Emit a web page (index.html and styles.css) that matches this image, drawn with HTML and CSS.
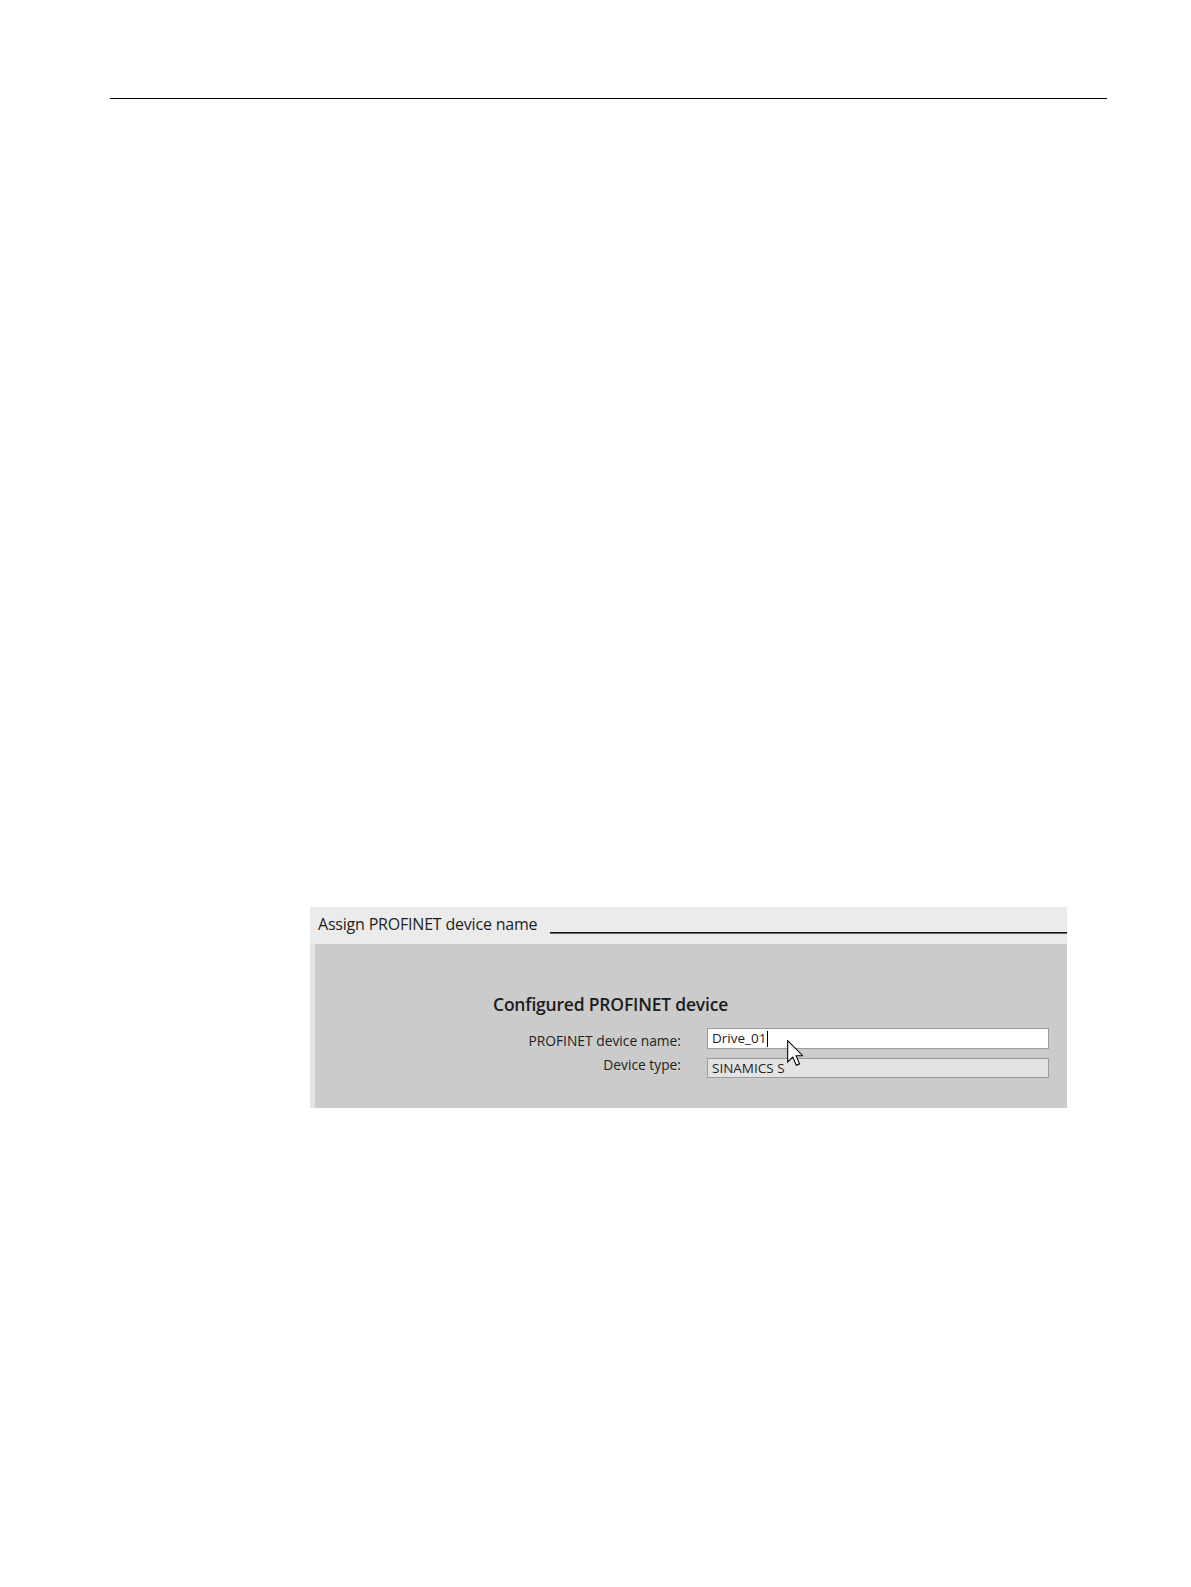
FILE: index.html
```html
<!DOCTYPE html>
<html>
<head>
<meta charset="utf-8">
<link rel="stylesheet" href="styles.css">
</head>
<body>
<div class="top-rule"></div>
<div class="panel">
  <div class="panel-head">
    <span class="head-title">Assign PROFINET device name</span>
    <span class="head-line"></span>
  </div>
  <div class="panel-body">
    <div class="form">
      <div class="form-title">Configured PROFINET device</div>
      <div class="form-rows">
        <div class="labels">
          <div class="label">PROFINET device name:</div>
          <div class="label">Device type:</div>
        </div>
        <div class="fields">
          <div class="field field-edit">Drive_01<span class="caret"></span></div>
          <div class="field field-ro">SINAMICS S</div>
        </div>
      </div>
    </div>
    <svg class="pointer" width="16" height="26" viewBox="0 0 12 19.5">
      <path d="M0.5,0.5 L0.5,16.5 L4.3,12.8 L7,18.9 L9.4,17.9 L6.8,11.8 L11.8,11.8 Z" fill="#fff" stroke="#000" stroke-width="0.8" stroke-linejoin="miter"/>
    </svg>
  </div>
</div>
</body>
</html>
```

FILE: styles.css
```css
html, body {
  margin: 0;
  padding: 0;
  background: #ffffff;
}
body {
  font-family: "Open Sans", "Noto Sans", sans-serif;
  color: #1a1a1a;
}
.top-rule {
  margin: 98px 84px 0 110px;
  height: 1px;
  background: #000;
}
.panel {
  margin: 808px 0 0 310px;
  width: 757px;
  position: relative;
}
.panel-head {
  height: 37px;
  background: #ebebeb;
  display: flex;
  align-items: flex-start;
}
.head-title {
  font-size: 16px;
  line-height: 22px;
  padding: 6px 0 0 8px;
  color: #1e1e1e;
  white-space: nowrap;
  letter-spacing: -0.2px;
}
.head-line {
  flex: 1;
  height: 1px;
  margin: 25px 0 0 13px;
  background: #111;
  border-bottom: 1px solid #666;
}
.panel-body {
  height: 164px;
  background: #cbcbcb;
  border-left: 5px solid #e4e4e4;
  box-sizing: border-box;
  padding: 48px 0 0 178px;
  position: relative;
}
.form {
  width: 556px;
}
.form-title {
  font-size: 17.5px;
  font-weight: 600;
  line-height: 24px;
  color: #1c1c1c;
  letter-spacing: -0.2px;
}
.form-rows {
  display: flex;
  margin-top: 12px;
}
.labels {
  width: 188px;
  display: flex;
  flex-direction: column;
  align-items: flex-end;
  gap: 6px;
  padding-top: 4px;
}
.label {
  font-size: 13.8px;
  line-height: 18px;
  color: #1e1e1e;
}
.fields {
  margin-left: 26px;
  width: 342px;
  display: flex;
  flex-direction: column;
  gap: 9px;
}
.field {
  box-sizing: border-box;
  border: 1px solid #9c9c9c;
  font-size: 13.5px;
  padding-left: 4px;
  color: #1e1e1e;
}
.field-edit {
  height: 21px;
  line-height: 19px;
  background: #ffffff;
  display: flex;
  align-items: center;
}
.field-ro {
  height: 20px;
  line-height: 18px;
  background: #e3e3e3;
}
.caret {
  display: inline-block;
  width: 1px;
  height: 16px;
  background: #000;
  margin-left: 1px;
}
.pointer {
  position: absolute;
  left: 472px;
  top: 96px;
}
```
